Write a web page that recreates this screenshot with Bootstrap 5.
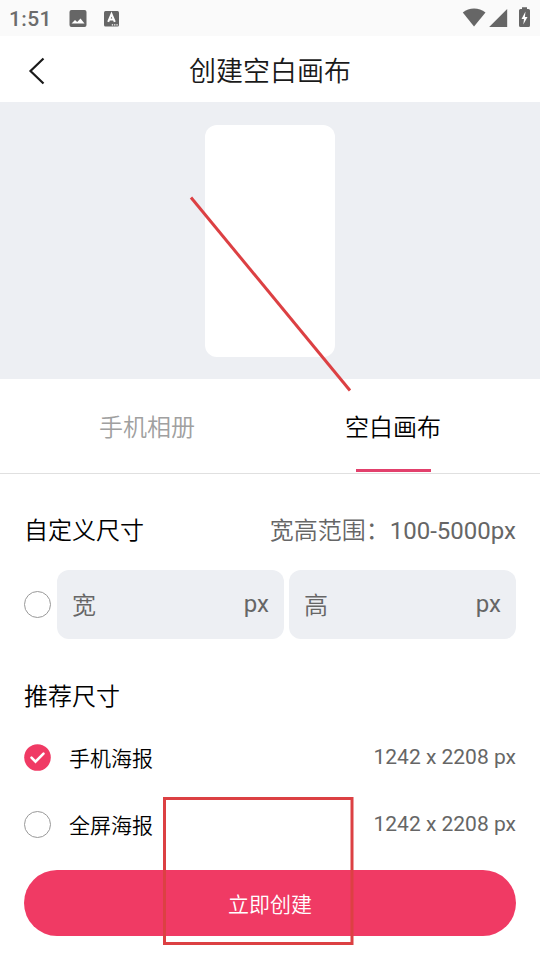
<!DOCTYPE html>
<html lang="zh-CN">
<head>
<meta charset="utf-8">
<meta name="viewport" content="width=device-width, initial-scale=1">
<title>创建空白画布</title>
<link href="https://cdn.jsdelivr.net/npm/bootstrap@5.3.0/dist/css/bootstrap.min.css" rel="stylesheet">
<style>
body { font-family: Roboto, "Noto Sans CJK SC", sans-serif; color: #000; background: #fff; font-size: 24px; line-height: 36px; }
.han { font-family: "Noto Sans CJK SC", sans-serif; font-weight: 350; }
.screen { width: 540px; height: 960px; overflow: hidden; }
.status { height: 36px; background: #fafafa; color: #666; padding: 0 9px; }
.clock { font-size: 21px; letter-spacing: .35px; width: 60px; font-weight: 500; color: #6c6c6c; padding-top: 1px; }
.topbar { height: 66px; font-size: 27px; color: #1a1a1a; display: grid; grid-template-columns: 60px 1fr 60px; padding: 0; }
.topbar .han { padding-top: 2px; }
.preview { height: 277px; background: #edeff3; padding-top: 23px; }
.sheet { width: 130px; height: 232px; border-radius: 12px; background: #fff; }
.tabs { height: 95px; border-bottom: 1px solid #e0e0e0; padding: 0 24px; }
.tabs .tab { color: #a0a0a0; padding-top: 29px; background: none; border: 0; }
.tabs .tab.active { color: #000; }
.bar { width: 75px; height: 3px; background: #e2406c; margin-top: 25px; }
.muted { color: #666; }
.form-area { padding: 37px 24px 0; }
.custom { height: 36px; }
.range { padding-top: 2px; }
.range .han { line-height: 1; }
.dial { width: 27px; height: 27px; border: 1px solid #999; border-radius: 50%; flex: none; }
.size-row { margin-top: 23px; }
.size-box { height: 69px; background: #edeff3; border-radius: 12px; padding: 0 15px; }
.boxes { gap: 5px; margin-left: 6px; }
.advice { margin-top: 38px; margin-bottom: 11px; }
.option { height: 67px; font-size: 21px; }
.option .label { margin-left: 18px; }
.option .muted, .option .label, .size-box span { padding-bottom: 2px; }
.create { height: 66px; background: #f03a64; color: #fff; font-size: 21px; margin-top: 12px; border: 0; }
.marks { left: 0; top: 0; pointer-events: none; }
</style>
<script src="https://cdn.jsdelivr.net/npm/bootstrap@5.3.0/dist/js/bootstrap.bundle.min.js"></script>
</head>
<body>
<main class="screen position-relative">
  <div class="status d-flex align-items-center">
    <span class="clock">1:51</span>
    <svg width="18" height="18" viewBox="0 0 18 18"><rect x=".5" y="1" width="17" height="17" rx="2" fill="#666"/><path d="M2.500 14.500 6 11l2.200 2L11.500 9.500l4 5z" fill="#fff"/></svg>
    <svg class="ms-3" width="18" height="18" viewBox="0 0 18 18"><rect x="1" y="2" width="15" height="15.500" rx="1.500" fill="#666"/><path d="M5.200 12.800 8.500 5l3.300 7.800M6.400 10.500h4.200" fill="none" stroke="#fff" stroke-width="2"/><path d="M8.800 15.800h6" stroke="#fff" stroke-width="1.300" stroke-dasharray="1.300 1"/></svg>
    <svg class="ms-auto" width="69" height="24" viewBox="0 0 69 24"><path d="M.8 6.500C7 1.200 17 1.200 23.500 6.500L12 20.500z" fill="#666"/><path d="M45.200 3v18h-18z" fill="#666"/><path d="M60 3V1.300h5V3h1.500q1.500 0 1.500 1.500v15q0 1.500-1.500 1.500h-8q-1.500 0-1.500-1.500v-15Q57 3 58.500 3z" fill="#666"/><path d="M63.500 5.500 59.500 13H62l-.7 5.500 4.200-7.500h-2.600z" fill="#fff"/></svg>
  </div>
  <header class="topbar align-items-center">
    <svg width="60" height="66" viewBox="0 0 60 66" role="img" aria-label="返回"><path d="M43.500 22.500 30.500 35l13 12.500" fill="none" stroke="#1a1a1a" stroke-width="2.200"/></svg>
    <div class="han text-center">创建空白画布</div>
  </header>
  <section class="preview"><div class="sheet mx-auto"></div></section>
  <nav class="tabs d-flex">
    <div class="tab han flex-fill text-center w-50">手机相册</div>
    <div class="tab active han flex-fill w-50 d-flex flex-column align-items-center">空白画布<div class="bar"></div></div>
  </nav>
  <section class="form-area">
    <div class="custom d-flex justify-content-between"><span class="han">自定义尺寸</span><span class="range muted"><span class="han">宽高范围：</span>100-5000px</span></div>
    <div class="size-row d-flex align-items-center">
      <span class="dial"></span>
      <div class="boxes d-flex flex-fill muted">
        <div class="size-box d-flex align-items-center justify-content-between flex-fill"><span class="han">宽</span><span>px</span></div>
        <div class="size-box d-flex align-items-center justify-content-between flex-fill"><span class="han">高</span><span>px</span></div>
      </div>
    </div>
    <div class="advice han">推荐尺寸</div>
    <div class="option d-flex align-items-center">
      <svg width="27" height="27" viewBox="0 0 27 27"><circle cx="13.500" cy="13.500" r="13.300" fill="#f03a64"/><path d="m7.500 13.700 4 4 8-8" fill="none" stroke="#fff" stroke-width="2.600" stroke-linecap="round"/></svg>
      <span class="label han">手机海报</span><span class="muted ms-auto">1242 x 2208 px</span>
    </div>
    <div class="option d-flex align-items-center">
      <span class="dial"></span><span class="label han">全屏海报</span><span class="muted ms-auto">1242 x 2208 px</span>
    </div>
    <button type="button" class="create han rounded-pill w-100 d-block">立即创建</button>
  </section>
  <svg class="marks position-absolute" width="540" height="960" viewBox="0 0 540 960"><path d="M191 197.500 350 390.500" stroke="#dc4043" stroke-width="3"/><rect x="164.500" y="798.500" width="187.500" height="145" fill="none" stroke="#dc4043" stroke-width="3"/></svg>
</main>
</body>
</html>
